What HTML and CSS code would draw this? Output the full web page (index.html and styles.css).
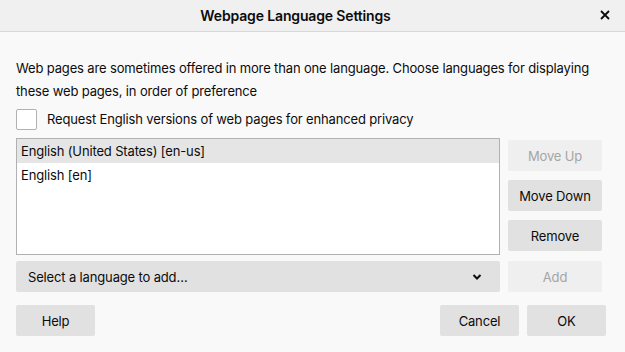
FILE: index.html
```html
<!DOCTYPE html>
<html lang="en">
<head>
  <meta charset="UTF-8">
  <meta name="viewport" content="width=device-width, initial-scale=1.0">
  <title>Webpage Language Settings</title>
  <link rel="stylesheet" href="styles.css">
</head>
<body>

<div class="titlebar">
  <div class="title">Webpage Language Settings</div>
  <button class="close" aria-label="Close">
    <svg width="10" height="10" viewBox="0 0 10 10"><path d="M1 1 L9 9 M9 1 L1 9" stroke="#0c0c0d" stroke-width="1.8" fill="none"/></svg>
  </button>
</div>

<div class="dialog">
  <p class="intro">Web pages are sometimes offered in more than one language. Choose languages for displaying these web pages, in order of preference</p>

  <label class="check">
    <span class="box"></span>
    Request English versions of web pages for enhanced privacy
  </label>

  <div class="lists">
    <div class="listbox">
      <div class="item selected">English (United States) [en-us]</div>
      <div class="item">English [en]</div>
    </div>
    <div class="side">
      <button class="btn" disabled>Move Up</button>
      <button class="btn">Move Down</button>
      <button class="btn">Remove</button>
    </div>
  </div>

  <div class="add-row">
    <div class="select">
      <span>Select a language to add…</span>
      <svg width="10" height="6" viewBox="0 0 10 6"><path d="M1.5 1 L5 4.5 L8.5 1" stroke="#0c0c0d" stroke-width="2" fill="none"/></svg>
    </div>
    <button class="btn" disabled>Add</button>
  </div>

  <div class="footer">
    <button class="btn small">Help</button>
    <div class="spacer"></div>
    <button class="btn small">Cancel</button>
    <button class="btn small">OK</button>
  </div>
</div>

</body>
</html>
```

FILE: styles.css
```css
body {
  margin: 0;
  font-family: Inter, "Noto Sans", sans-serif;
  font-size: 13px;
  letter-spacing: -0.15px;
  color: #0c0c0d;
  background-color: #f9f9f9;
}
.titlebar {
  display: flex;
  align-items: center;
  height: 31px;
  background-color: #f0f0f0;
  border-bottom: 1px solid #d7d7d7;
}
.title {
  flex: 1;
  text-align: center;
  font-weight: 600;
  font-size: 14px;
  padding-left: 6px;
}
.close {
  width: 40px;
  height: 31px;
  background: none;
  border: none;
  padding: 0 0 2px 0;
  display: flex;
  align-items: center;
  justify-content: center;
}
.dialog {
  padding: 25px 16px 0 16px;
}
.intro {
  margin: 0;
  line-height: 23px;
  padding-right: 10px;
}
.check {
  display: flex;
  align-items: center;
  gap: 10px;
  margin-top: 5px;
  height: 22px;
}
.box {
  width: 19px;
  height: 19px;
  border: 1px solid #b1b1b1;
  border-radius: 2px;
  background: white;
}
.lists {
  display: flex;
  gap: 8px;
  margin-top: 8px;
}
.listbox {
  width: 482px;
  height: 115px;
  background: white;
  border: 1px solid #b1b1b1;
}
.item {
  height: 24px;
  line-height: 24px;
  padding-left: 4px;
}
.item.selected {
  background-color: #e5e5e5;
}
.side {
  display: flex;
  flex-direction: column;
  gap: 9px;
  padding-top: 2px;
}
.btn {
  width: 94px;
  height: 31px;
  border: none;
  border-radius: 2px;
  background-color: #e1e1e1;
  color: #0c0c0d;
  font-family: inherit;
  font-size: 13px;
  letter-spacing: inherit;
  padding: 0;
}
.btn:disabled {
  background-color: #efefef;
  color: #a5a5a5;
}
.add-row {
  display: flex;
  gap: 8px;
  margin-top: 6px;
}
.select {
  width: 484px;
  height: 31px;
  border-radius: 2px;
  background-color: #e1e1e1;
  display: flex;
  align-items: center;
  justify-content: space-between;
  padding: 0 18px 0 12px;
  box-sizing: border-box;
}
.footer {
  display: flex;
  gap: 8px;
  margin-top: 13px;
  margin-right: 3px;
}
.spacer {
  flex: 1;
}
.btn.small {
  width: 79px;
}
```
